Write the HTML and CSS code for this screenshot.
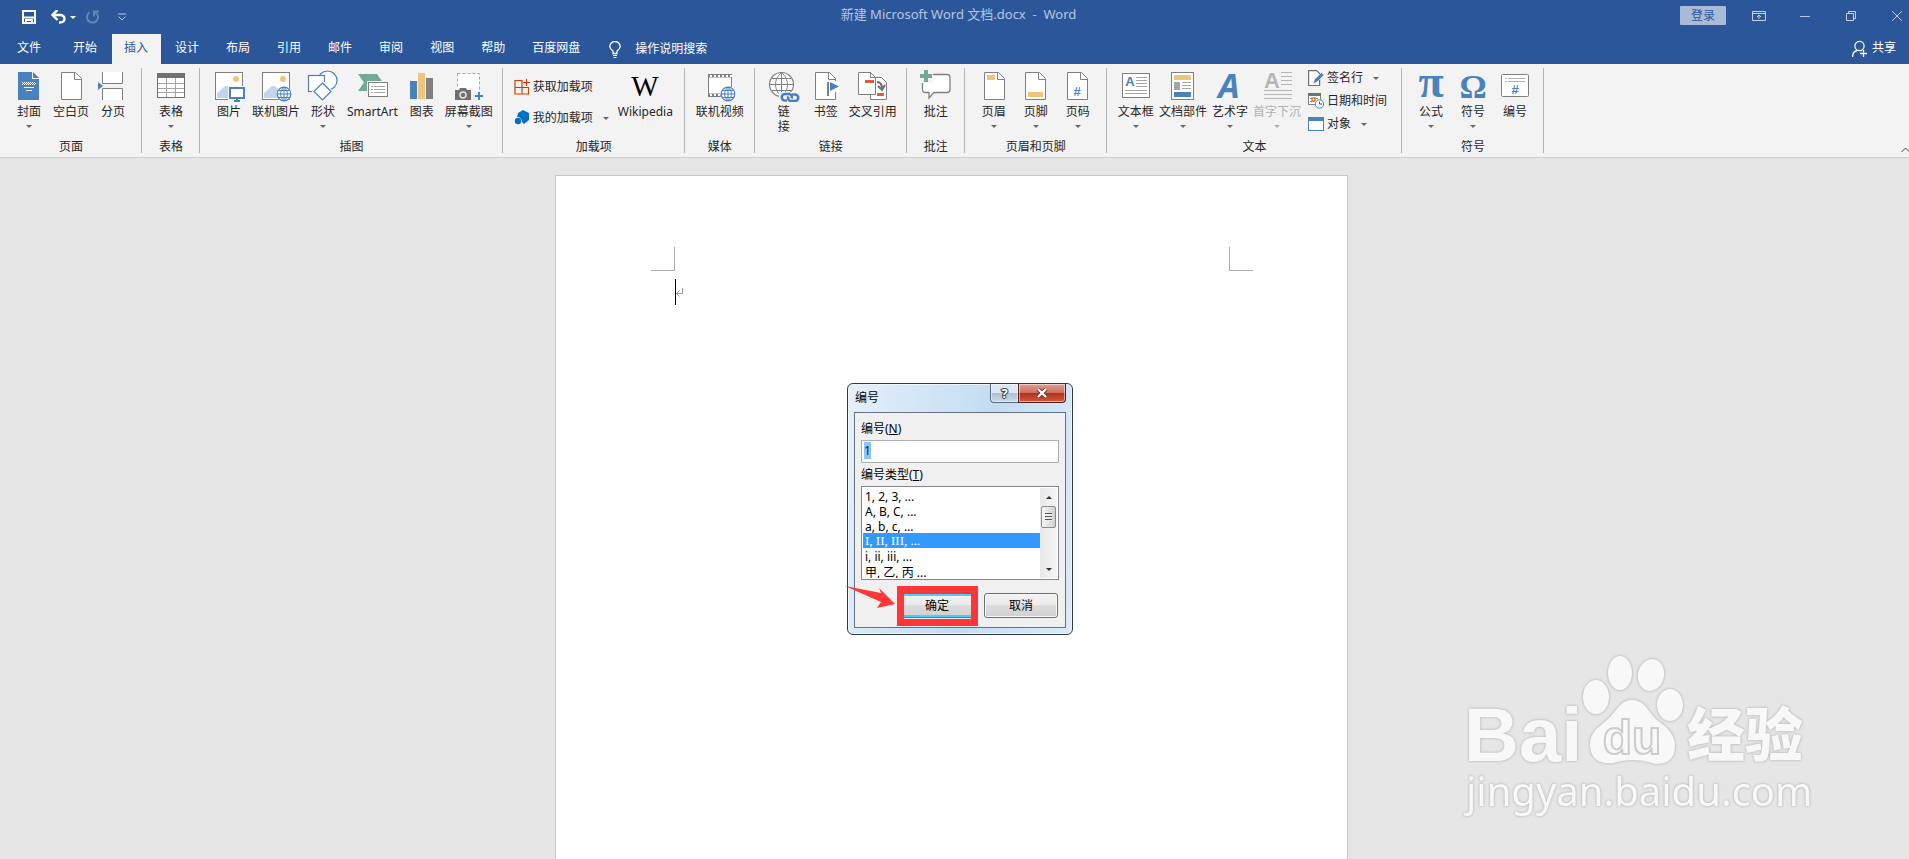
FILE: index.html
```html
<!DOCTYPE html>
<html lang="zh-CN">
<head>
	<meta charset="utf-8">
	<title>新建 Microsoft Word 文档.docx - Word</title>
	<link rel="stylesheet" href="styles.css">
</head>
<body>
	<!-- shared icon parts -->
	<svg class="defs" aria-hidden="true">
		<symbol id="sheet" viewBox="0 0 21 28">
			<path d="M.5.5h14l6 6v21H.5z" fill="#fff" stroke="#808080"/>
			<path d="M13.500.5v7h7" fill="none" stroke="#808080"/>
		</symbol>
		<symbol id="globe" viewBox="0 0 16 16">
			<circle cx="8" cy="8" r="7.6" fill="#f3f3f3"/>
			<circle cx="8" cy="8" r="6.8" fill="#fff" stroke="#4a82bd" stroke-width="1.2"/>
			<path d="M8 1v14M1 8h14M2.500 4.500h11M2.500 11.500h11M8 1C3.500 5 3.500 11 8 15M8 1c4.500 4 4.500 10 0 14" fill="none" stroke="#4a82bd"/>
		</symbol>
		<symbol id="photo" viewBox="0 0 28 28">
			<rect x=".5" y=".5" width="27" height="27" fill="#fff" stroke="#808080"/>
			<circle cx="21" cy="7" r="3" fill="#eec57a"/>
			<path d="M2 26v-5l8-7h3l6 6v6z" fill="#c3d5ea"/>
		</symbol>
	</svg>

	<header class="titlebar">
		<div class="quick">
			<button class="plain" aria-label="保存"><svg width="14" height="14"><path d="M1 1h12v12H1z" fill="none" stroke="#fff" stroke-width="2"/><path d="M2 7.500h10M4 13v-3h6v3" fill="none" stroke="#fff" stroke-width="2"/></svg></button>
			<button class="plain undo" aria-label="撤消"><svg width="16" height="14"><path d="M2 5h7c6 0 6 7.500 0 7.500H8" fill="none" stroke="#fff" stroke-width="2.400"/><path d="M6.500 0L1.500 5l5 5" fill="none" stroke="#fff" stroke-width="2.400"/></svg><i class="arrow"></i></button>
			<button class="plain redo" aria-label="恢复"><svg width="14" height="14"><path d="M3.500 2.500a5.500 5.500 0 1 0 6 0" fill="none" stroke="#6584b6" stroke-width="2"/><path d="M8 6.500V1.500h5" fill="none" stroke="#6584b6" stroke-width="2"/></svg></button>
			<button class="plain" aria-label="自定义快速访问工具栏"><svg width="10" height="8"><path d="M1 1h8M1.500 3.500L5 7l3.500-3.500" fill="none" stroke="#b5c6e0"/></svg></button>
		</div>
		<h1>新建 Microsoft Word 文档.docx &nbsp;-&nbsp; Word</h1>
		<div class="window">
			<button class="login">登录</button>
			<button class="plain" aria-label="功能区显示选项"><svg width="14" height="12"><path d="M.5 1.500h13v9H.5zM.5 3.500h13M7 9V5.500M5 7l2-2 2 2" fill="none" stroke="#c6d3e7"/></svg></button>
			<button class="plain" aria-label="最小化"><svg width="14" height="12"><path d="M2 6.500h10" stroke="#b5c6e0"/></svg></button>
			<button class="plain" aria-label="还原"><svg width="14" height="12"><path d="M2.500 3.500h7v7h-7zM4.500 3.500v-2h7v7h-2" fill="none" stroke="#c6d3e7"/></svg></button>
			<button class="plain" aria-label="关闭"><svg width="14" height="12"><path d="M2 1l10 10M12 1L2 11" stroke="#c6d3e7"/></svg></button>
		</div>
	</header>

	<nav class="tabs">
		<a class="file" href="#">文件</a>
		<a href="#">开始</a>
		<a class="active" href="#">插入</a>
		<a href="#">设计</a>
		<a href="#">布局</a>
		<a href="#">引用</a>
		<a href="#">邮件</a>
		<a href="#">审阅</a>
		<a href="#">视图</a>
		<a href="#">帮助</a>
		<a href="#">百度网盘</a>
		<button class="plain tellme"><svg width="12" height="17"><path d="M4 12.500V10C2 8.500.8 7.500.8 5.500a5.200 5 0 0 1 10.400 0C11.200 7.500 10 8.500 8 10v2.500z" fill="none" stroke="#fff" stroke-width="1.300"/><path d="M4 14.500h4M4.500 16.500h3" stroke="#fff"/></svg>操作说明搜索</button>
		<button class="plain share"><svg width="16" height="17"><circle cx="7.500" cy="6" r="4.600" fill="none" stroke="#fff" stroke-width="1.200"/><path d="M.6 17c0-4 2-6 4.500-6.500M8 13.500h7M11.500 10v7" fill="none" stroke="#fff" stroke-width="1.300"/></svg>共享</button>
	</nav>

	<div class="ribbon">
		<section class="group">
			<div class="tools">
				<button class="tool"><svg width="32" height="32"><path d="M5 2h14v7h7v21H5z" fill="#4a82bd"/><path d="M20 2l6 6h-6z" fill="#4a82bd"/><path d="M9 12.500h13M9 14.500h13" stroke="#fff" stroke-dasharray="1 1"/><path d="M10 13.500h13" stroke="#fff" stroke-dasharray="1 1"/><path d="M11 17.500h10M13 20.500h6" stroke="#fff"/></svg>封面<i class="arrow"></i></button>
				<button class="tool"><svg width="32" height="32"><use href="#sheet" x="6" y="2" width="21" height="28"/></svg>空白页</button>
				<button class="tool"><svg width="32" height="32"><path d="M5.500 2v11.500h20V2M5.500 30V18.500h20V30" fill="#fff" stroke="#808080"/><path d="M1 12l5 4-5 4z" fill="#4a82bd"/></svg>分页</button>
			</div>
			<h2>页面</h2>
		</section>

		<section class="group">
			<div class="tools">
				<button class="tool"><svg width="32" height="32"><rect x="2.500" y="3.500" width="27" height="24" fill="#fff" stroke="#707070"/><path d="M2 3h28v5H2z" fill="#707070"/><path d="M11.500 8v19M20.500 8v19M3 13.500h26M3 18.500h26M3 22.500h26" stroke="#a5a5a5"/></svg>表格<i class="arrow"></i></button>
			</div>
			<h2>表格</h2>
		</section>

		<section class="group">
			<div class="tools">
				<button class="tool"><svg width="32" height="32"><use href="#photo" x="2" y="2" width="28" height="28"/><path d="M15 16h17v14H15z" fill="#f3f3f3"/><rect x="17" y="18" width="14" height="10" fill="#fff" stroke="#4a82bd" stroke-width="2"/><path d="M24 28v2M21 31h6" stroke="#4a82bd" stroke-width="2"/></svg>图片</button>
				<button class="tool"><svg width="32" height="32"><use href="#photo" x="2" y="2" width="28" height="28"/><use href="#globe" x="16" y="16" width="16" height="16"/></svg>联机图片</button>
				<button class="tool"><svg width="32" height="32"><g fill="#fff" stroke="#4a82bd" stroke-width="1.200"><circle cx="20.500" cy="10.500" r="9.500"/><rect x="1.500" y="5.500" width="16" height="16"/><path d="M15.500 11l10 10.500-10 10.500-10-10.500z" stroke="#f3f3f3"/><path d="M15.500 13l8.500 8.500-8.500 8.500L7 21.500z"/></g></svg>形状<i class="arrow"></i></button>
				<button class="tool wide"><svg width="32" height="32"><path d="M2 4h19l6 8.500-6 8.500H2l6-8.500z" fill="#74a998"/><path d="M11 11h21v17H11z" fill="#f3f3f3"/><rect x="12.500" y="12.500" width="19" height="14" fill="#fff" stroke="#808080"/><path d="M15 16.500h2M18 16.500h11M15 19.500h2M18 19.500h11M15 22.500h2M18 22.500h11" stroke="#a5a5a5"/></svg>SmartArt</button>
				<button class="tool"><svg width="32" height="32"><path d="M4 11h7v18H4z" fill="#4a82bd"/><path d="M12 3h7v26h-7z" fill="#eec57a"/><path d="M20 8h7v21h-7z" fill="#808080"/></svg>图表</button>
				<button class="tool"><svg width="32" height="32"><rect x="4.500" y="3.500" width="22" height="22" fill="#fff" stroke="#a5a5a5" stroke-dasharray="3 2"/><path d="M1 18h19v13H1z" fill="#f3f3f3"/><path d="M2 20h4l1-2h6l1 2h4v10H2z" fill="#707070"/><circle cx="10" cy="25" r="3" fill="none" stroke="#e5e5e5" stroke-width="1.500"/><path d="M21 21h10v10H21z" fill="#f3f3f3"/><path d="M26 22v8M22 26h8" stroke="#4a82bd" stroke-width="2"/></svg>屏幕截图<i class="arrow"></i></button>
			</div>
			<h2>插图</h2>
		</section>

		<section class="group">
			<div class="tools">
				<div class="stack addins">
					<button class="small"><svg width="16" height="16"><path d="M1 1.500h7v7H1zM1 8.500h7v6.500H1zM8 8.500h6.500V15H8M12.500 0v7M9 3.500h7" fill="none" stroke="#d83b01" stroke-width="1.200"/></svg>获取加载项</button>
					<button class="small"><svg width="16" height="16"><path d="M4 3l5-3 6 3v7l-5 4-2-2c0-3-2-5-5-5z" fill="#0072c6"/><circle cx="4" cy="11" r="3.200" fill="#0072c6"/></svg>我的加载项<i class="arrow"></i></button>
				</div>
				<button class="tool wiki"><svg width="32" height="32"><text x="16" y="26" class="glyph-w">W</text></svg>Wikipedia</button>
			</div>
			<h2>加载项</h2>
		</section>

		<section class="group">
			<div class="tools">
				<button class="tool wide"><svg width="32" height="32"><rect x="4.500" y="4.500" width="23" height="22" fill="#fff" stroke="#808080"/><path d="M5 6h23M5 25h23" stroke="#808080" stroke-width="3"/><path d="M6 6h22M6 25h22" stroke="#fff" stroke-width="2" stroke-dasharray="2 2"/><use href="#globe" x="16" y="16" width="16" height="16"/></svg>联机视频</button>
			</div>
			<h2>媒体</h2>
		</section>

		<section class="group">
			<div class="tools">
				<button class="tool"><svg width="32" height="32"><circle cx="13.500" cy="14.500" r="12" fill="#fff" stroke="#808080" stroke-width="1.200"/><path d="M13.500 2.500v24M1.500 14.500h24M4 8.500h19M4 20.500h19M13.500 2.500c-8 7-8 17 0 24M13.500 2.500c8 7 8 17 0 24" fill="none" stroke="#808080"/><path d="M11 22h21v10H11z" fill="#f3f3f3"/><g fill="none" stroke="#4a82bd" stroke-width="2.600"><path d="M19 30.500h-2a3.200 3.200 0 0 1 0-6.500h4a3 3 0 0 1 2.500 4.500"/><path d="M24 24.500h3a3.200 3.200 0 0 1 0 6.500h-4a3 3 0 0 1-2.500-4.500"/></g></svg>链<br>接</button>
				<button class="tool"><svg width="32" height="32"><use href="#sheet" x="5" y="2" width="21" height="28"/><path d="M16 11h14v11H20v4h-4z" fill="#fff"/><path d="M18 12v14" stroke="#808080" stroke-width="2"/><path d="M20 12l9 4.500-9 4.500z" fill="#4a82bd"/></svg>书签</button>
				<button class="tool"><svg width="32" height="32"><path d="M13.500 7.500h11l5 5v17h-16z" fill="#fff" stroke="#808080"/><path d="M1.500 2.500h12l5 5v17h-17z" fill="#fff" stroke="#808080"/><path d="M13.500 2.500v5h5" fill="none" stroke="#808080"/><path d="M8 10h9v3H8zM20 23h7v3h-7z" fill="#dd5f3f"/><path d="M20 12c4 0 5 3 5 7M21 16l4 4 3-5" fill="none" stroke="#707070" stroke-width="2"/></svg>交叉引用</button>
			</div>
			<h2>链接</h2>
		</section>

		<section class="group">
			<div class="tools">
				<button class="tool"><svg width="32" height="32"><path d="M5 4.500h22q3 0 3 3v12q0 3-3 3H14L9 28v-5.500H5.500q-3 0-3-3V7z" fill="#fff" stroke="#808080" stroke-width="1.300"/><path d="M0 0h13v13H0z" fill="#f3f3f3"/><path d="M6 0v12M0 6h12" stroke="#74a998" stroke-width="4"/></svg>批注</button>
			</div>
			<h2>批注</h2>
		</section>

		<section class="group">
			<div class="tools">
				<button class="tool"><svg width="32" height="32"><use href="#sheet" x="6" y="2" width="21" height="28"/><path d="M9 5h8v5H9z" fill="#eec57a"/></svg>页眉<i class="arrow"></i></button>
				<button class="tool"><svg width="32" height="32"><use href="#sheet" x="5" y="2" width="21" height="28"/><path d="M8 22h15v5H8z" fill="#eec57a"/></svg>页脚<i class="arrow"></i></button>
				<button class="tool"><svg width="32" height="32"><use href="#sheet" x="5" y="2" width="21" height="28"/><text x="15" y="26" class="glyph-hash">#</text></svg>页码<i class="arrow"></i></button>
			</div>
			<h2>页眉和页脚</h2>
		</section>

		<section class="group">
			<div class="tools">
				<button class="tool"><svg width="32" height="32"><rect x="2.500" y="3.500" width="27" height="24" fill="#fff" stroke="#808080"/><text x="10" y="16" class="glyph-box">A</text><path d="M16 7.500h11M16 10.500h11M16 13.500h11M16 16.500h11M5 20.500h22M5 23.500h22" stroke="#a5a5a5"/></svg>文本框<i class="arrow"></i></button>
				<button class="tool"><svg width="32" height="32"><rect x="4.500" y="2.500" width="22" height="27" fill="#fff" stroke="#808080"/><path d="M7 5h17v5H7z" fill="#eec57a"/><path d="M7 12h6v8H7z" fill="#a5a5a5"/><path d="M15 12.500h9M15 15.500h9M15 18.500h9" stroke="#a5a5a5"/><path d="M7 22h17v5H7z" fill="#4a82bd"/></svg>文档部件<i class="arrow"></i></button>
				<button class="tool"><svg width="32" height="32"><text x="15" y="28" class="glyph-art">A</text></svg>艺术字<i class="arrow"></i></button>
				<button class="tool off" disabled><svg width="32" height="32"><text x="11" y="18" class="glyph-drop">A</text><path d="M20 2.500h11M20 6.500h11M20 10.500h11M20 14.500h11M3 20.500h28M3 24.500h28M3 28.500h28" stroke="#b5b5b5"/></svg>首字下沉<i class="arrow"></i></button>
				<div class="stack">
					<button class="small"><svg width="16" height="16"><path d="M.6.6h8l3 3v12H.6z" fill="#fff" stroke="#707070" stroke-width="1.200"/><path d="M5 14l1.500-4.500 7-7 2.500 2.500-7 7z" fill="#4a82bd" stroke="#f3f3f3" stroke-width=".6"/></svg>签名行<i class="arrow"></i></button>
					<button class="small"><svg width="16" height="16"><rect x=".5" y=".5" width="12" height="11" fill="#fff" stroke="#808080"/><path d="M0 0h13v3H0z" fill="#707070"/><path d="M2 5.500h9M2 8.500h4" stroke="#909090" stroke-dasharray="2 1"/><rect x="4" y="5" width="3" height="3" fill="#fff" stroke="#e06a10" stroke-width="1.300"/><circle cx="11.500" cy="11" r="4.200" fill="#fff" stroke="#4a82bd"/><path d="M11.500 8.500V11h2.500" fill="none" stroke="#555"/></svg>日期和时间</button>
					<button class="small"><svg width="16" height="16"><rect x=".5" y="1.500" width="15" height="13" fill="#fff" stroke="#4a82bd"/><path d="M0 1h16v4H0z" fill="#4a82bd"/></svg>对象<i class="arrow"></i></button>
				</div>
			</div>
			<h2>文本</h2>
		</section>

		<section class="group">
			<div class="tools">
				<button class="tool"><svg width="32" height="32"><text x="16" y="27" class="glyph-symbol pi">π</text></svg>公式<i class="arrow"></i></button>
				<button class="tool"><svg width="32" height="32"><text x="16" y="28" class="glyph-symbol">Ω</text></svg>符号<i class="arrow"></i></button>
				<button class="tool"><svg width="32" height="32"><rect x="2.500" y="4.500" width="27" height="22" rx="1" fill="#fff" stroke="#808080"/><path d="M6 8.500h2M9 8.500h17M6 11.500h2M9 11.500h17" stroke="#b0b0b0"/><text x="16" y="24" class="glyph-hash">#</text></svg>编号</button>
			</div>
			<h2>符号</h2>
		</section>

		<button class="plain collapse" aria-label="折叠功能区"><svg width="8" height="6"><path d="M.5 5l4-4 4 4" fill="none" stroke="#444"/></svg></button>
	</div>

	<main class="workspace">
		<article class="paper">
			<div class="margins"><span class="corner left"></span><span class="corner right"></span></div>
			<p class="line"><span class="caret"></span><svg width="8" height="9"><path d="M6.500 0v5.500H0M3.500 2.500l-3 3 3 3" fill="none" stroke="#999"/></svg></p>

			<form class="dialog">
				<div class="caption">
					<h3>编号</h3>
					<button type="button" class="help" aria-label="帮助">?</button>
					<button type="button" class="close" aria-label="关闭"><svg width="12" height="10"><path d="M2 1l8 8M10 1L2 9" stroke="#5b2a2a" stroke-width="4"/><path d="M2 1l8 8M10 1L2 9" stroke="#fff" stroke-width="2.400"/></svg></button>
				</div>
				<div class="pane">
					<label for="number">编号(<u>N</u>)</label>
					<input id="number" type="text" value="1">
					<label for="type">编号类型(<u>T</u>)</label>
					<div class="listbox">
						<select id="type" size="6">
							<option>1, 2, 3, ...</option>
							<option>A, B, C, ...</option>
							<option>a, b, c, ...</option>
							<option class="roman" selected>I, II, III, ...</option>
							<option>i, ii, iii, ...</option>
							<option>甲, 乙, 丙 ...</option>
						</select>
						<div class="scroll">
							<i class="up"></i>
							<span class="thumb"></span>
							<i class="down"></i>
						</div>
					</div>
					<div class="actions">
						<button type="button" class="ok">确定</button>
						<button type="button">取消</button>
					</div>
				</div>
				<span class="mark"></span>
				<svg class="pointer" width="52" height="24"><path d="M0 0l36 7-2-5 16 16-18 4 4-6z" fill="#fb3737"/></svg>
			</form>
		</article>

		<svg class="watermark" width="360" height="180" viewBox="0 0 360 180">
			<g fill="#f8f8f8">
				<text x="4" y="111" class="wm-bai">Bai</text>
				<ellipse cx="136" cy="47" rx="13" ry="17"/>
				<ellipse cx="160" cy="23" rx="12" ry="17"/>
				<ellipse cx="191" cy="25" rx="13" ry="16" transform="rotate(12 191 25)"/>
				<ellipse cx="210" cy="55" rx="13" ry="16"/>
				<path d="M172 50c13 0 16 12 25 20 12 9 18 15 18 27 0 14-12 19-23 16-13-4-25-4-39 0-14 2-23-5-23-18s8-17 18-26c9-8 12-19 24-19z"/>
				<text x="227" y="106" class="wm-cn">经验</text>
				<text x="6" y="156" class="wm-url">jingyan.baidu.com</text>
			</g>
			<text x="172" y="104" class="wm-du">du</text>
		</svg>
	</main>

	<script>
		// the number box opens with its value selected
		const numberBox = document.getElementById("number");
		numberBox.focus();
		numberBox.select();
	</script>
</body>
</html>
```
FILE: styles.css
```css
* {
	box-sizing: border-box;
}

body {
	margin: 0;
	height: 100vh;
	display: flex;
	flex-direction: column;
	overflow: hidden;
	font: 12px/16px "Noto Sans", "Noto Sans CJK SC", sans-serif;
	color: #262626;
	background: #e6e6e6;
}

button,
input,
select {
	font: inherit;
	color: inherit;
}

h1,
h2,
h3,
p {
	margin: 0;
	font: inherit;
}

svg {
	display: block;
	flex: none;
}

.defs {
	position: absolute;
	width: 0;
	height: 0;
}

.plain {
	padding: 0;
	border: none;
	background: none;
	display: flex;
	align-items: center;
}

.arrow {
	border: 3px solid transparent;
	border-top-color: #6a6a6a;
	border-bottom: none;
}

/* title bar */
.titlebar {
	flex: none;
	height: 34px;
	display: grid;
	grid-template-columns: 1fr auto 1fr;
	background: #2b579a;
	color: #b5c6e0;
}

.quick,
.window {
	display: flex;
	align-items: center;
	height: 32px;
}

.quick {
	padding: 2px 0 0 22px;
	gap: 15px;
}

.undo {
	gap: 3px;
}

.undo .arrow {
	border-top-color: #fff;
}

.redo {
	margin: 0 2px 0 -5px;
}

.titlebar h1 {
	padding: 6px 0 0 8px;
	font-size: 13px;
}

.window {
	justify-content: flex-end;
	gap: 32px;
	padding: 0 5px 1px 0;
}

.login {
	width: 46px;
	height: 19px;
	margin-right: -6px;
	padding: 0;
	border: none;
	border-radius: 1px;
	background: #a9bbd7;
	color: #2b579a;
	line-height: 18px;
}

/* tabs */
.tabs {
	flex: none;
	height: 30px;
	display: flex;
	gap: 2px;
	background: #2b579a;
	color: #fff;
}

.tabs a {
	padding: 0 13px 0 12px;
	color: #fff;
	line-height: 28px;
	text-decoration: none;
}

.tabs .file {
	padding: 0 18px 0 17px;
}

.tabs .active {
	background: #f3f3f3;
	color: #2b579a;
}

.tellme {
	margin-left: 14px;
	gap: 14px;
	color: #fff;
}

.share {
	margin: 0 13px 0 auto;
	gap: 4px;
	padding-bottom: 2px;
	color: #fff;
}

/* ribbon */
.ribbon {
	position: relative;
	flex: none;
	height: 94px;
	display: flex;
	padding: 4px 0;
	background: #f3f3f3;
	border-bottom: 1px solid #d0d0d0;
}

.group {
	display: flex;
	flex-direction: column;
	justify-content: space-between;
	padding: 2px 7px 0 8px;
	border-right: 1px solid #b4b4b4;
}

.group h2 {
	line-height: 12px;
	text-align: center;
}

.tools {
	display: flex;
	height: 66px;
}

.tool {
	min-width: 42px;
	padding: 0 2px;
	border: none;
	background: none;
	display: flex;
	flex-direction: column;
	align-items: center;
	line-height: 15px;
	white-space: nowrap;
}

.tool svg {
	margin-bottom: 2px;
}

.tool .arrow {
	margin-top: 6px;
}

.wide {
	padding: 0 3px;
}

.off {
	color: #b1b1b1;
}

.off .arrow {
	border-top-color: #b1b1b1;
}

.stack {
	display: flex;
	flex-direction: column;
	gap: 7px;
	padding: 0 7px 0 5px;
}

.addins {
	gap: 15px;
	padding: 9px 0 0 3px;
}

.small {
	padding: 0;
	border: none;
	background: none;
	display: flex;
	align-items: center;
	gap: 3px;
}

.small .arrow {
	margin-left: 7px;
}

.wiki {
	min-width: 63px;
	margin-left: 5px;
}

.collapse {
	position: absolute;
	right: 0;
	bottom: 4px;
}

.glyph-w {
	font: 29px "Liberation Serif", serif;
	text-anchor: middle;
	fill: #000;
}

.glyph-hash {
	font: bold 13px "Liberation Sans", sans-serif;
	text-anchor: middle;
	fill: #4a82bd;
}

.glyph-box {
	font: bold 13px "Liberation Sans", sans-serif;
	text-anchor: middle;
	fill: #4a82bd;
}

.glyph-art {
	font: italic bold 34px "Open Sans", sans-serif;
	text-anchor: middle;
	fill: #4a82bd;
}

.glyph-drop {
	font: bold 22px "Liberation Sans", sans-serif;
	text-anchor: middle;
	fill: #b5b5b5;
}

.glyph-symbol {
	font: bold 34px "Liberation Serif", serif;
	text-anchor: middle;
	fill: #4a82bd;
}

.pi {
	font-size: 46px;
}

/* document */
.workspace {
	position: relative;
	flex: 1;
	min-height: 0;
	padding: 17px 6px 0 0;
	display: flex;
	justify-content: center;
	align-items: stretch;
	overflow: hidden;
}

.paper {
	position: relative;
	width: 793px;
	padding: 71px 94px 0 95px;
	background: #fff;
	border: 1px solid #c6c6c6;
	border-bottom: none;
}

.margins {
	display: flex;
	justify-content: space-between;
}

.corner {
	width: 24px;
	height: 24px;
	border-bottom: 1px solid #ababab;
}

.left {
	border-right: 1px solid #ababab;
}

.right {
	border-left: 1px solid #ababab;
}

.line {
	display: flex;
	align-items: center;
	margin: 8px 0 0 24px;
}

.caret {
	width: 1px;
	height: 26px;
	background: #000;
}

/* numbering dialog */
.dialog {
	position: absolute;
	left: 291px;
	top: 207px;
	width: 226px;
	padding: 0 6px 6px;
	border: 1px solid #2c3a48;
	border-radius: 6px;
	background: linear-gradient(100deg, #e6f0fa, #c3dcf3 55%, #dbeafa);
	box-shadow: inset 0 0 0 1px #f0f8ff;
	color: #000;
}

.caption {
	height: 28px;
	display: flex;
	align-items: flex-start;
}

.caption h3 {
	flex: 1;
	padding: 6px 0 0 1px;
}

.caption button {
	height: 19px;
	padding: 0;
	border: 1px solid #5c6b7c;
	border-top: none;
	box-shadow: inset 0 0 0 1px #ffffff80;
}

.caption .help {
	width: 28px;
	border-right: none;
	border-radius: 0 0 0 4px;
	background: linear-gradient(#dde8f3 50%, #aebfd1 50%, #c9dbec);
	color: #fff;
	font-weight: bold;
	font-size: 13px;
	-webkit-text-stroke: 2px #3f4650;
	paint-order: stroke fill;
}

.caption .close {
	width: 48px;
	display: grid;
	place-items: center;
	border-color: #561d1d;
	border-radius: 0 0 4px 0;
	background: linear-gradient(#dfa095, #cf6d5c 50%, #b0301f 50%, #cf5a3c);
}

.pane {
	display: flex;
	flex-direction: column;
	padding: 8px 6px 9px;
	border: 1px solid #66727f;
	background: #f0f0f0;
}

.pane input {
	height: 23px;
	margin: 3px 0 4px;
	padding: 0 2px 2px;
	border: 1px solid #abadb3;
	background: #fff;
	outline: none;
}

.pane input::selection {
	background: #8ac4ff;
	color: #222;
}

.listbox {
	height: 94px;
	margin-top: 3px;
	padding: 1px;
	display: flex;
	border: 1px solid #828790;
	background: #fff;
}

.listbox select {
	flex: 1;
	min-width: 0;
	padding: 0;
	border: none;
	outline: none;
	background: #fff;
	overflow: hidden;
	scrollbar-width: none;
}

.listbox option {
	height: 15px;
	min-height: 15px;
	padding: 0 2px;
	line-height: 15px;
	color: #000;
}

.listbox option:checked {
	background: #39f linear-gradient(#39f, #39f);
	color: #fff;
}

.listbox .roman {
	font-family: "Liberation Serif", serif;
	font-size: 13px;
}

.scroll {
	width: 17px;
	display: flex;
	flex-direction: column;
	align-items: center;
	padding: 8px 0 7px;
	background: linear-gradient(90deg, #e9e9e9, #f4f4f4);
}

.up {
	border: 3px solid transparent;
	border-top: none;
	border-bottom-color: #333;
}

.down {
	margin-top: auto;
	border: 3px solid transparent;
	border-bottom: none;
	border-top-color: #333;
}

.thumb {
	width: 15px;
	height: 22px;
	margin-top: 7px;
	border: 1px solid #8c8c8c;
	border-radius: 2px;
	background:
		repeating-linear-gradient(#555 0 1px, #eee 1px 3px) center / 7px 8px no-repeat,
		linear-gradient(90deg, #f5f5f5, #d0d0d0);
}

.actions {
	display: flex;
	justify-content: flex-end;
	gap: 10px;
	margin-top: 13px;
	padding-right: 1px;
}

.actions button {
	width: 74px;
	height: 25px;
	padding: 0;
	border: 1px solid #707070;
	border-radius: 3px;
	background: linear-gradient(#f2f2f2, #ebebeb 50%, #dddddd 50%, #cfcfcf);
	box-shadow: inset 0 0 0 1px #fafafa;
}

.actions .ok {
	border-color: #3c7fb1;
	box-shadow: inset 0 0 0 2px #48d0f8;
}

/* highlight drawn over the dialog */
.mark {
	position: absolute;
	left: 49px;
	bottom: 8px;
	width: 81px;
	height: 40px;
	border: 7px solid #fb3737;
}

.pointer {
	position: absolute;
	left: -3px;
	bottom: 24px;
}

.watermark {
	position: absolute;
	right: 89px;
	bottom: 29px;
	filter: drop-shadow(0 0 1px #bbb) drop-shadow(0 0 1px #ccc);
}

.wm-bai {
	font: bold 76px "Liberation Sans", sans-serif;
}

.wm-cn {
	font: 900 58px "Noto Sans CJK SC", sans-serif;
}

.wm-url {
	font: 40px "Noto Sans", sans-serif;
}

.wm-du {
	font: bold 48px "Liberation Sans", sans-serif;
	text-anchor: middle;
	fill: #f8f8f8;
	stroke: #ccc;
	stroke-width: 2px;
}
```
